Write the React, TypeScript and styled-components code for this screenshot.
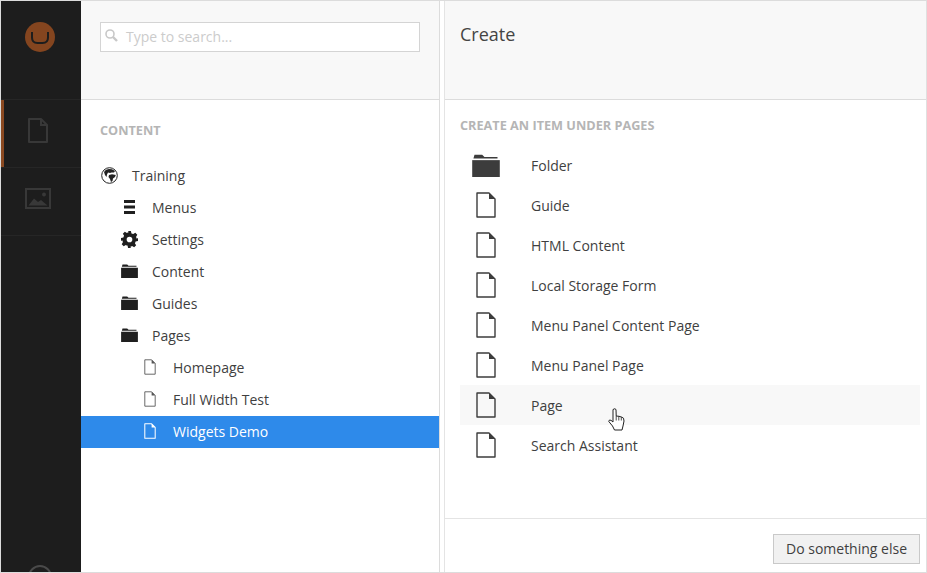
import React from "react";
import styled, { createGlobalStyle } from "styled-components";

const Global = createGlobalStyle`
  html, body { margin: 0; padding: 0; background: #fff; }
  body { font-family: "Open Sans", "Liberation Sans", sans-serif; overflow: hidden; }
`;

const Frame = styled.div`
  width: 927px; height: 573px; box-sizing: border-box;
  border: 1px solid #dcdcdc; border-right-color: #e0e0e0;
  display: flex; overflow: hidden; background: #fff;
`;

const Rail = styled.nav`
  width: 80px; flex: none; background: #1d1d1d; display: flex; flex-direction: column;
  position: relative;
`;
const LogoBox = styled.div`
  height: 98px; flex: none; display: flex; justify-content: flex-start; padding: 21px 0 0 24px; box-sizing: border-box;
`;
const RailItem = styled.div<{ $active?: boolean }>`
  height: 68px; flex: none; box-sizing: border-box; border-top: 1px solid #262626;
  display: flex; align-items: center; justify-content: center; position: relative;
  padding: 0 6px 6px 0;
  ${(p) => p.$active && `&::before { content: ""; position: absolute; left: 0; top: 0; bottom: 0; width: 3px; background: #8b4a22; }`}
`;
const RailDivider = styled.div`
  border-top: 1px solid #262626;
`;
const RailBottom = styled.div`
  position: absolute; left: 27px; bottom: -17px; width: 24px; height: 24px;
  border: 2px solid #4a4a4a; border-radius: 50%; box-sizing: border-box;
`;

const TreePanel = styled.section`
  width: 358px; flex: none; display: flex; flex-direction: column; border-right: 1px solid #dcdcdc; box-sizing: content-box;
`;
const Gutter = styled.div`
  width: 4px; flex: none; background: #fff; border-right: 1px solid #e4e4e4; box-sizing: content-box;
`;
const Header = styled.header`
  height: 98px; flex: none; box-sizing: content-box; background: #f8f8f8; border-bottom: 1px solid #dcdcdc;
`;
const TreeHeader = styled(Header)`
  padding: 21px 19px 0; height: 77px;
`;
const SearchBox = styled.div`
  height: 30px; box-sizing: border-box; background: #fff; border: 1px solid #d4d4d4;
  display: flex; align-items: center; padding: 0 0 2px 4px; gap: 7px; width: 320px;
`;
const SearchText = styled.span`
  font-size: 14px; color: #cccccc;
`;
const SectionLabel = styled.h3`
  margin: 0; font-size: 12.7px; font-weight: 700; color: #b5b5b5; text-transform: uppercase; line-height: 16px;
`;
const TreeLabel = styled(SectionLabel)`
  padding: 22px 19px 0; height: 38px; box-sizing: content-box;
`;
const Tree = styled.ul`
  list-style: none; margin: 0; padding: 0;
`;
const TreeRow = styled.li<{ $level: number; $selected?: boolean }>`
  height: 32px; box-sizing: border-box; display: flex; align-items: center; font-size: 14px; padding-bottom: 2px;
  padding-left: ${(p) => 19 + p.$level * 20}px;
  background: ${(p) => (p.$selected ? "#2e8aea" : "transparent")};
  color: ${(p) => (p.$selected ? "#fff" : "#3f3f3f")};
  font-weight: ${(p) => (p.$selected ? 500 : 400)};
`;
const TreeIcon = styled.span<{ $level: number }>`
  width: ${(p) => (p.$level === 1 ? 18 : 20)}px; height: 20px; flex: none; display: flex; align-items: center; justify-content: center;
  margin-right: ${(p) => (p.$level === 0 ? 12 : p.$level === 1 ? 14 : 13)}px; color: #1f1f1f;
`;

const CreatePanel = styled.section`
  flex: 1; display: flex; flex-direction: column; min-width: 0;
`;
const CreateHeader = styled(Header)`
  padding: 20px 15px 0; height: 78px; font-size: 18px; line-height: 26px; color: #444;
`;
const CreateBody = styled.div`
  flex: 1; padding: 17px 6px 0 15px;
`;
const CreateList = styled.ul`
  list-style: none; margin: 12px 0 0; padding: 0;
`;
const CreateRow = styled.li<{ $hover?: boolean }>`
  height: 40px; display: flex; align-items: center; font-size: 14px; color: #3f3f3f; position: relative;
  background: ${(p) => (p.$hover ? "#f8f8f8" : "transparent")};
`;
const CreateIcon = styled.span`
  width: 52px; flex: none; display: flex; justify-content: center; margin-right: 19px; color: #3c3c3c;
`;
const Cursor = styled.svg`
  position: absolute; left: 148px; top: 23px;
`;
const Footer = styled.footer`
  height: 54px; flex: none; box-sizing: border-box; border-top: 1px solid #e4e4e4;
  display: flex; justify-content: flex-end; align-items: flex-start; padding: 15px 6px 0 0;
`;
const Button = styled.button`
  height: 30px; width: 147px; box-sizing: border-box; background: #f1f1f1; border: 1px solid #c9c9c9; border-radius: 0;
  font-family: inherit; font-size: 14px; color: #3f3f3f; padding: 0 0 2px;
`;

const Page = ({ size = 20, color = "currentColor", sw = 1.4 }: { size?: number; color?: string; sw?: number }) => (
  <svg width={Math.round(size * 0.75)} height={size} viewBox="0 0 15 20" fill="none">
    <path d="M1 1 H9.5 L14 5.5 V19 H1 Z" stroke={color} strokeWidth={sw} strokeLinejoin="round" />
    <path d="M9.5 1 V5.5 H14 Z" fill={color} />
  </svg>
);
const BigPage = () => (
  <svg width="20" height="26" viewBox="0 0 20 26" fill="none">
    <path d="M1 1 H13 L19 7 V25 H1 Z" stroke="#3c3c3c" strokeWidth="1.4" strokeLinejoin="round" />
    <path d="M13 1 V7 H19 Z" fill="#3c3c3c" />
  </svg>
);
const Folder = ({ w = 17, h = 14 }: { w?: number; h?: number }) => (
  <svg width={w} height={h} viewBox="0 0 18 15" fill="currentColor">
    <path d="M1.5 0.5 H6.5 L8 2 H16.5 V3 H0.8 Z" />
    <path d="M0 4 H18 V15 H0 Z" />
  </svg>
);
const Menu = () => (
  <svg width="11" height="14" viewBox="0 0 11 14" fill="currentColor">
    <rect width="11" height="3" y="0" />
    <rect width="11" height="3" y="5.5" />
    <rect width="11" height="3" y="11" />
  </svg>
);
const Gear = () => (
  <svg width="17" height="17" viewBox="0 0 24 24" fill="currentColor">
    <path fillRule="evenodd" d="M10 0 h4 l.8 3.4 a9 9 0 0 1 2.4 1 l3-1.8 2.8 2.8-1.8 3 a9 9 0 0 1 1 2.4 L24 10 v4 l-3.4.8 a9 9 0 0 1-1 2.4 l1.8 3-2.8 2.8-3-1.8 a9 9 0 0 1-2.4 1 L14 24 h-4 l-.8-3.4 a9 9 0 0 1-2.4-1 l-3 1.8-2.8-2.8 1.8-3 a9 9 0 0 1-1-2.4 L0 14 v-4 l3.4-.8 a9 9 0 0 1 1-2.4 l-1.8-3 2.8-2.8 3 1.8 a9 9 0 0 1 2.4-1 Z M12 8 a4 4 0 1 0 0 8 a4 4 0 0 0 0-8 Z" />
  </svg>
);
const GlobeSvg = styled.svg`
  margin-left: -2px;
`;
const Globe = () => (
  <GlobeSvg width="17" height="17" viewBox="0 0 17 17">
    <circle cx="8.5" cy="8.5" r="7.8" fill="#fff" stroke="#222" strokeWidth="1" />
    <path d="M3 5 L5 2.8 L8 2 L11 2.2 L14 4 L13 5.5 L10.5 5.5 L9 6 L7 5.5 L6 7.5 L5.5 10 L4 8 Z" fill="#222" />
    <path d="M8 8 L11 7.2 L14.8 8 L14 10 L12 11.5 L11.5 14 L10 15 L9 12 L7.5 10 Z" fill="#222" />
  </GlobeSvg>
);
const Search = () => (
  <svg width="14" height="14" viewBox="0 0 14 14" fill="none" stroke="#c8c8c8">
    <circle cx="5" cy="5" r="4" strokeWidth="1.6" />
    <path d="M8 8 L12 12" strokeWidth="2.4" />
  </svg>
);
const Logo = () => (
  <svg width="30" height="30" viewBox="0 0 30 30">
    <circle cx="15" cy="15" r="15" fill="#84451f" />
    <path d="M7 10 V15.5 Q7 21 12.5 21 H17.5 Q23 21 23 15.5 V10" fill="none" stroke="#1d1d1d" strokeWidth="2" />
  </svg>
);
const RailPage = () => (
  <svg width="20" height="25" viewBox="0 0 20 25" fill="none" stroke="#383838" strokeWidth="2">
    <path d="M1 1 H13 L19 7 V24 H1 Z" strokeLinejoin="round" />
    <path d="M13 1 V7 H19" />
  </svg>
);
const RailImage = () => (
  <svg width="26" height="21" viewBox="0 0 26 21" fill="none">
    <rect x="1" y="1" width="24" height="19" stroke="#383838" strokeWidth="2" />
    <circle cx="19" cy="6.5" r="2" fill="#383838" />
    <path d="M3.5 17.5 L9 10.5 L13 14 L16 12 L22.5 17.5 Z" fill="#383838" />
  </svg>
);
const HandCursor = () => (
  <Cursor width="17" height="23" viewBox="0 0 17 23">
    <path
      d="M5 1.5 Q7 0 8 1.5 L8.2 8 L11 8.3 L13.5 9 L15.5 10.2 L16 13 L15 18 L14 22 H6.5 L4.5 18 L0.8 13.5 Q0.8 11.3 3 12.3 L5 14 Z"
      fill="#fff" stroke="#222" strokeWidth="1" strokeLinejoin="round"
    />
    <path d="M8.2 8 V12.5 M10.8 8.5 V12.5 M13.3 9 V12.5" stroke="#222" strokeWidth="0.8" fill="none" />
  </Cursor>
);

const tree: { label: string; level: number; icon: React.ReactNode; selected?: boolean }[] = [
  { label: "Training", level: 0, icon: <Globe /> },
  { label: "Menus", level: 1, icon: <Menu /> },
  { label: "Settings", level: 1, icon: <Gear /> },
  { label: "Content", level: 1, icon: <Folder /> },
  { label: "Guides", level: 1, icon: <Folder /> },
  { label: "Pages", level: 1, icon: <Folder /> },
  { label: "Homepage", level: 2, icon: <Page size={16} color="#555" sw={1.1} /> },
  { label: "Full Width Test", level: 2, icon: <Page size={16} color="#555" sw={1.1} /> },
  { label: "Widgets Demo", level: 2, icon: <Page size={16} color="#fff" sw={1.3} />, selected: true },
];
const items = ["Guide", "HTML Content", "Local Storage Form", "Menu Panel Content Page", "Menu Panel Page", "Page", "Search Assistant"];

export default function App() {
  return (
    <>
      <Global />
      <Frame>
        <Rail>
          <LogoBox><Logo /></LogoBox>
          <RailItem $active><RailPage /></RailItem>
          <RailItem><RailImage /></RailItem>
          <RailDivider />
          <RailBottom />
        </Rail>
        <TreePanel>
          <TreeHeader>
            <SearchBox><Search /><SearchText>Type to search...</SearchText></SearchBox>
          </TreeHeader>
          <TreeLabel>Content</TreeLabel>
          <Tree>
            {tree.map((t) => (
              <TreeRow key={t.label} $level={t.level} $selected={t.selected}>
                <TreeIcon $level={t.level}>{t.icon}</TreeIcon>
                {t.label}
              </TreeRow>
            ))}
          </Tree>
        </TreePanel>
        <Gutter />
        <CreatePanel>
          <CreateHeader>Create</CreateHeader>
          <CreateBody>
            <SectionLabel>Create an item under Pages</SectionLabel>
            <CreateList>
              <CreateRow>
                <CreateIcon><Folder w={28} h={23} /></CreateIcon>
                Folder
              </CreateRow>
              {items.map((i) => (
                <CreateRow key={i} $hover={i === "Page"}>
                  <CreateIcon><BigPage /></CreateIcon>
                  {i}
                  {i === "Page" && <HandCursor />}
                </CreateRow>
              ))}
            </CreateList>
          </CreateBody>
          <Footer><Button>Do something else</Button></Footer>
        </CreatePanel>
      </Frame>
    </>
  );
}
